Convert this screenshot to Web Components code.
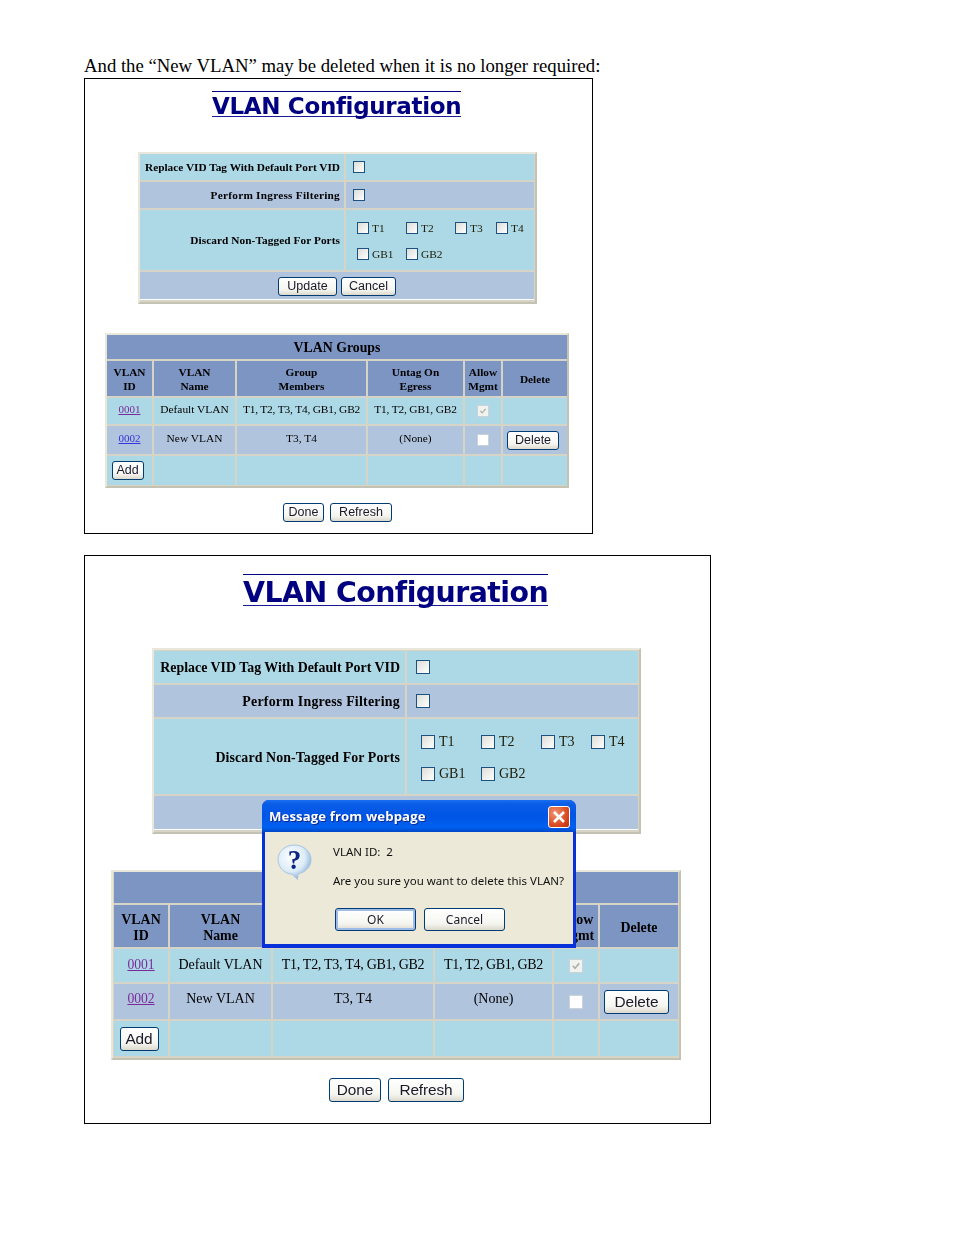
<!DOCTYPE html>
<html lang="en">
<head>
<meta charset="utf-8">
<title>VLAN Configuration</title>
<style>
  html, body { margin: 0; background: #fff; }
  body { font-family: "Liberation Serif", serif; color: #000; height: 1235px; overflow: hidden; }

  .small {
    width: 509px; height: 456px; margin: 0 0 21px 84px;
    --pad-top: 12px;
    --title-size: 23px; --title-h: 20px; --title-top: 4px; --title-w: 249px; --title-sp: -0.33px; --title-x: 127px;
    --label-size: 11.3px; --cell-size: 11.4px; --head-size: 13.8px; --port-size: 11.4px; --link-size: 11px;
    --btn-size: 12.5px; --btn-h: 19px; --btn-sp: 0;
    --cb: 12px; --label-pad: 4px; --check-pad: 7px; --lift: 4px; --head-top: 2px; --label-top: 0;
    --list-top: 2px; --list-sp: -0.18px;
  }
  .large {
    width: 627px; height: 569px; margin: 0 0 0 84px;
    --pad-top: 18px;
    --title-size: 28.4px; --title-h: 24px; --title-top: 6px; --title-w: 305px; --title-sp: -0.55px; --title-x: 158px;
    --label-size: 13.9px; --cell-size: 14px; --head-size: 16.5px; --port-size: 14px; --link-size: 13.6px;
    --btn-size: 15.4px; --btn-h: 24px; --btn-sp: -0.1px;
    --cb: 14px; --label-pad: 5px; --check-pad: 9px; --lift: 4px; --head-top: 4px; --label-top: 2px;
    --list-top: 3px; --list-sp: -0.28px;
  }
  .small > * { filter: blur(0.2px); }
  .large > * { filter: blur(0.35px); }
  .small .cfg {
    --cols: 204px 188px; --rows: 26px 26px 60px 28px; --pad: 0 1px 2px 0;
    margin: 35px 0 0 53px;
  }
  .large .cfg {
    --cols: 251px 231px; --rows: 32px 32px 75px 34px; --pad: 1px 1px 2px 0;
    margin: 42px 0 0 67px;
  }
  .small .grp {
    --cols: 45px 81px 129px 95px 36px 64px; --rows: 24px 35px 26px 28px 29px; --pad: 0 0 1px 0;
    margin: 29px 0 0 20px;
  }
  .large .grp {
    --cols: 54px 101px 160px 117px 44px 78px; --rows: 31px 42px 33px 35px 35px; --pad: 0 1px 2px 1px;
    margin: 36px 0 0 26px;
  }
  .small .ports { --port-cols: 49px 49px 41px 40px; --port-row: 26px; --port-x: 11px; --port-gap: 3px; }
  .large .ports { --port-cols: 60px 60px 50px 50px; --port-row: 32px; --port-x: 14px; --port-gap: 4px; }
  .small .bar { margin: 15px 0 0 198px; gap: 6px; }
  .large .bar { margin: 18px 0 0 244px; gap: 7px; }
  .bar { display: flex; }
</style>
</head>
<body>

<page-caption>And the “New VLAN” may be deleted when it is no longer required:</page-caption>

<vlan-panel class="small">
  <vlan-title>VLAN Configuration</vlan-title>
  <tbl-grid class="cfg">
    <tbl-cell label>Replace VID Tag With Default Port VID</tbl-cell>
    <tbl-cell start><x-check></x-check></tbl-cell>
    <tbl-cell label alt style="letter-spacing:.24px">Perform Ingress Filtering</tbl-cell>
    <tbl-cell start alt><x-check></x-check></tbl-cell>
    <tbl-cell label style="letter-spacing:.07px">Discard Non-Tagged For Ports</tbl-cell>
    <tbl-cell start class="ports" plain>
      <port-list>
        <port-item>T1</port-item><port-item>T2</port-item><port-item>T3</port-item><port-item>T4</port-item>
        <port-item>GB1</port-item><port-item>GB2</port-item>
      </port-list>
    </tbl-cell>
    <tbl-cell span alt foot>
      <x-btn style="--w:59px">Update</x-btn><x-btn style="--w:55px;margin-left:4px">Cancel</x-btn>
    </tbl-cell>
  </tbl-grid>
  <tbl-grid class="grp">
    <tbl-cell span head big>VLAN Groups</tbl-cell>
    <tbl-cell head>VLAN<br>ID</tbl-cell>
    <tbl-cell head>VLAN<br>Name</tbl-cell>
    <tbl-cell head>Group<br>Members</tbl-cell>
    <tbl-cell head>Untag On<br>Egress</tbl-cell>
    <tbl-cell head>Allow<br>Mgmt</tbl-cell>
    <tbl-cell head>Delete</tbl-cell>
    <tbl-cell lift><vlan-link visited>0001</vlan-link></tbl-cell>
    <tbl-cell lift>Default VLAN</tbl-cell>
    <tbl-cell lift list>T1, T2, T3, T4, GB1, GB2</tbl-cell>
    <tbl-cell lift list>T1, T2, GB1, GB2</tbl-cell>
    <tbl-cell><x-check disabled checked></x-check></tbl-cell>
    <tbl-cell></tbl-cell>
    <tbl-cell lift alt style="padding-bottom:5px"><vlan-link>0002</vlan-link></tbl-cell>
    <tbl-cell lift alt style="padding-bottom:5px">New VLAN</tbl-cell>
    <tbl-cell lift alt style="padding-bottom:5px">T3, T4</tbl-cell>
    <tbl-cell lift alt style="padding-bottom:5px">(None)</tbl-cell>
    <tbl-cell alt><x-check disabled></x-check></tbl-cell>
    <tbl-cell alt><x-btn style="--w:52px;margin-right:4px">Delete</x-btn></tbl-cell>
    <tbl-cell><x-btn style="--w:32px;margin-right:4px">Add</x-btn></tbl-cell>
    <tbl-cell></tbl-cell><tbl-cell></tbl-cell><tbl-cell></tbl-cell><tbl-cell></tbl-cell><tbl-cell></tbl-cell>
  </tbl-grid>
  <div class="bar"><x-btn style="--w:41px">Done</x-btn><x-btn style="--w:62px">Refresh</x-btn></div>
</vlan-panel>

<vlan-panel class="large">
  <vlan-title>VLAN Configuration</vlan-title>
  <tbl-grid class="cfg">
    <tbl-cell label>Replace VID Tag With Default Port VID</tbl-cell>
    <tbl-cell start><x-check></x-check></tbl-cell>
    <tbl-cell label alt style="letter-spacing:.24px">Perform Ingress Filtering</tbl-cell>
    <tbl-cell start alt><x-check></x-check></tbl-cell>
    <tbl-cell label style="letter-spacing:.1px">Discard Non-Tagged For Ports</tbl-cell>
    <tbl-cell start class="ports" plain>
      <port-list>
        <port-item>T1</port-item><port-item>T2</port-item><port-item>T3</port-item><port-item>T4</port-item>
        <port-item>GB1</port-item><port-item>GB2</port-item>
      </port-list>
    </tbl-cell>
    <tbl-cell span alt foot></tbl-cell>
  </tbl-grid>
  <tbl-grid class="grp">
    <tbl-cell span head big></tbl-cell>
    <tbl-cell head>VLAN<br>ID</tbl-cell>
    <tbl-cell head>VLAN<br>Name</tbl-cell>
    <tbl-cell head></tbl-cell>
    <tbl-cell head></tbl-cell>
    <tbl-cell head>Allow<br>Mgmt</tbl-cell>
    <tbl-cell head>Delete</tbl-cell>
    <tbl-cell lift style="padding-bottom:2px"><vlan-link visited>0001</vlan-link></tbl-cell>
    <tbl-cell lift style="padding-bottom:2px">Default VLAN</tbl-cell>
    <tbl-cell lift list style="padding-bottom:2px">T1, T2, T3, T4, GB1, GB2</tbl-cell>
    <tbl-cell lift list style="padding-bottom:2px;letter-spacing:-.37px">T1, T2, GB1, GB2</tbl-cell>
    <tbl-cell><x-check disabled checked></x-check></tbl-cell>
    <tbl-cell></tbl-cell>
    <tbl-cell lift alt style="padding-bottom:6px"><vlan-link visited>0002</vlan-link></tbl-cell>
    <tbl-cell lift alt style="padding-bottom:6px">New VLAN</tbl-cell>
    <tbl-cell lift alt style="padding-bottom:6px">T3, T4</tbl-cell>
    <tbl-cell lift alt style="padding-bottom:6px">(None)</tbl-cell>
    <tbl-cell alt><x-check disabled></x-check></tbl-cell>
    <tbl-cell alt><x-btn style="--w:65px;margin-right:5px">Delete</x-btn></tbl-cell>
    <tbl-cell><x-btn style="--w:39px;margin-right:4px">Add</x-btn></tbl-cell>
    <tbl-cell></tbl-cell><tbl-cell></tbl-cell><tbl-cell></tbl-cell><tbl-cell></tbl-cell><tbl-cell></tbl-cell>
  </tbl-grid>
  <div class="bar"><x-btn style="--w:52px">Done</x-btn><x-btn style="--w:76px">Refresh</x-btn></div>

  <msg-dialog heading="Message from webpage">
    <div>VLAN ID:&nbsp; 2</div>
    <div>Are you sure you want to delete this VLAN?</div>
  </msg-dialog>
</vlan-panel>

<script>
  function define(name, css, html) {
    customElements.define(name, class extends HTMLElement {
      constructor() {
        super();
        this.attachShadow({ mode: "open" });
        this.shadowRoot.innerHTML = `<style>${css}</style>${html}`;
      }
    });
  }

  define("page-caption", `
    :host { display: block; margin-left: 84px; height: 78px; padding-top: 55px; box-sizing: border-box;
      font: 18.73px/22px "Liberation Serif", serif; white-space: nowrap; }
  `, `<slot></slot>`);

  define("vlan-panel", `
    :host { display: flex; flex-direction: column; align-items: flex-start; position: relative;
      box-sizing: border-box; border: 1px solid #000; background: #fff; padding-top: var(--pad-top); }
  `, `<slot></slot>`);

  define("vlan-title", `
    :host { display: block; box-sizing: border-box; width: var(--title-w); margin-left: var(--title-x);
      padding-top: var(--title-top);
      border-top: 1px solid #000080; border-bottom: 1px solid #1a1a98;
      font: bold var(--title-size)/var(--title-h) "DejaVu Sans", sans-serif;
      letter-spacing: var(--title-sp); color: #000080; white-space: nowrap; text-align: center; }
  `, `<slot></slot>`);

  define("tbl-grid", `
    :host { display: block; width: max-content; border: 2px solid; border-color: #e9e6da #c4c2b2 #c4c2b2 #e9e6da;
      background: #d6d4c6; }
    .grid { display: grid; grid-template-columns: var(--cols); grid-template-rows: var(--rows); gap: 2px; padding: var(--pad); }
  `, `<div class="grid"><slot></slot></div>`);

  define("tbl-cell", `
    :host { display: flex; align-items: center; justify-content: center; box-sizing: border-box; min-width: 0;
      background: #add8e6; text-align: center; font-size: var(--cell-size); line-height: 14px; white-space: nowrap; overflow: hidden; }
    :host([alt]) { background: #b0c4de; }
    :host([head]) { background: #7c95c3; font-weight: bold; font-size: var(--label-size); line-height: 1.17; padding-top: var(--head-top); }
    :host([big]) { font-size: var(--head-size); }
    :host([span]) { grid-column: 1 / -1; }
    :host([label]) { justify-content: flex-end; font-weight: bold; font-size: var(--label-size); padding-right: var(--label-pad); padding-top: var(--label-top); }
    :host([start]) { justify-content: flex-start; padding-left: var(--check-pad); }
    :host([plain]) { padding-left: 0; }
    :host([lift]) { padding-bottom: var(--lift); }
    :host([list]) { letter-spacing: var(--list-sp); }
    :host([foot]) { box-shadow: inset 0 -1px 0 #fff; }
  `, `<slot></slot>`);

  define("port-list", `
    :host { display: grid; grid-template-columns: var(--port-cols); grid-auto-rows: var(--port-row); padding-left: var(--port-x); padding-top: var(--list-top); }
  `, `<slot></slot>`);

  define("port-item", `
    :host { display: flex; align-items: center; gap: var(--port-gap); font-size: var(--port-size); color: #20200c; }
  `, `<x-check></x-check><slot></slot>`);

  customElements.define("x-check", class extends HTMLElement {
    constructor() {
      super();
      this.attachShadow({ mode: "open" });
      const tick = this.hasAttribute("checked")
        ? `<svg viewBox="0 0 12 12"><path d="M2.8 5.8 5 8.2 9.2 3.4" fill="none" stroke="#a8b2a8" stroke-width="1.6"/></svg>`
        : "";
      this.shadowRoot.innerHTML = `
        <style>
          :host { display: block; flex: none; box-sizing: border-box; width: var(--cb); height: var(--cb);
            border: 1px solid #1c5180; background: linear-gradient(135deg, #dcdcd7, #fff); }
          :host([disabled]) { border-color: #cad3da; background: #fff; }
          :host([disabled][checked]) { background: #f2f3ee; }
          svg { display: block; width: 100%; height: 100%; }
        </style>${tick}`;
    }
  });

  define("vlan-link", `
    :host { font-size: var(--link-size); color: #3434e0; text-decoration: underline; }
    :host([visited]) { color: #7a2a9a; }
  `, `<slot></slot>`);

  define("x-btn", `
    :host { display: inline-flex; align-items: center; justify-content: center; box-sizing: border-box;
      width: var(--w); height: var(--btn-h); border: 1px solid #003c74; border-radius: 3px;
      background: linear-gradient(#fff, #f5f5f0 70%, #dcd8cc);
      font: var(--btn-size)/1 "Liberation Sans", sans-serif; letter-spacing: var(--btn-sp); color: #1a1a2a; white-space: nowrap; }
    :host([focused]) { box-shadow: inset 0 0 0 2px #9dbce8; }
  `, `<slot></slot>`);

  customElements.define("msg-dialog", class extends HTMLElement {
    constructor() {
      super();
      this.attachShadow({ mode: "open" });
      this.shadowRoot.innerHTML = `
        <style>
          :host { position: absolute; left: 177px; top: 244px; width: 314px; height: 148px; display: flex; flex-direction: column;
            box-sizing: border-box; border-radius: 7px 7px 0 0; background: #0831d9;
            font: 11.5px/16px "Noto Sans", sans-serif; color: #111; --btn-h: 23px; --btn-size: 12px; --btn-sp: 0; }
          .bar { height: 32px; flex: none; display: flex; align-items: center; justify-content: space-between;
            padding: 2px 6px 0 7px; box-sizing: border-box; border-radius: 7px 7px 0 0;
            background: linear-gradient(#1a6ef0, #0a5de6 12%, #0055e5 50%, #0060f0 85%, #0048c8);
            color: #fff; font: bold 13.2px/1 "Open Sans", sans-serif; letter-spacing: 0.1px; text-shadow: 1px 1px 0 #0a2a90; }
          .close { width: 22px; height: 22px; box-sizing: border-box; border: 1px solid #fff; border-radius: 3px; background: radial-gradient(circle at 30% 30%, #f0926f, #d8481f 65%, #b8300f); }
          .close svg { display: block; width: 100%; height: 100%; }
          .body { flex: 1; margin: 0 3px 4px; background: #ece9d8; display: grid; grid-template-columns: 68px 1fr; }
          .icon { width: 35px; height: 36px; margin: 12px 0 0 12px; }
          .text { padding-top: 12px; white-space: nowrap; }
          ::slotted(div:nth-child(2)) { margin-top: 13px; }
          .btns { display: flex; gap: 8px; margin: 19px 0 0 2px; }
          x-btn { font-family: "Noto Sans", sans-serif; }
        </style>
        <div class="bar">
          <span>${this.getAttribute("heading")}</span>
          <span class="close"><svg viewBox="0 0 20 20"><path d="M5 5 15 15M15 5 5 15" stroke="#fff" stroke-width="2.6" fill="none"/></svg></span>
        </div>
        <div class="body">
          <svg class="icon" viewBox="0 0 35 36">
            <defs><radialGradient id="b" cx="40%" cy="35%" r="70%"><stop offset="0" stop-color="#fff"/><stop offset=".6" stop-color="#dcecf8"/><stop offset="1" stop-color="#7fa8d4"/></radialGradient></defs>
            <path d="M17.5 1C8 1 1 7.500 1 15.500S8 30 15 30.200L20.500 35.500 21 29.800C28.500 28.500 34 22.800 34 15.500S27 1 17.500 1Z" fill="url(#b)" stroke="#a8c4de"/>
            <text x="17.500" y="25" text-anchor="middle" font-family="Liberation Serif" font-weight="bold" font-size="27" fill="#0c2484">?</text>
          </svg>
          <div class="text">
            <slot></slot>
            <div class="btns"><x-btn focused style="--w:81px">OK</x-btn><x-btn style="--w:81px">Cancel</x-btn></div>
          </div>
        </div>`;
    }
  });
</script>
</body>
</html>
